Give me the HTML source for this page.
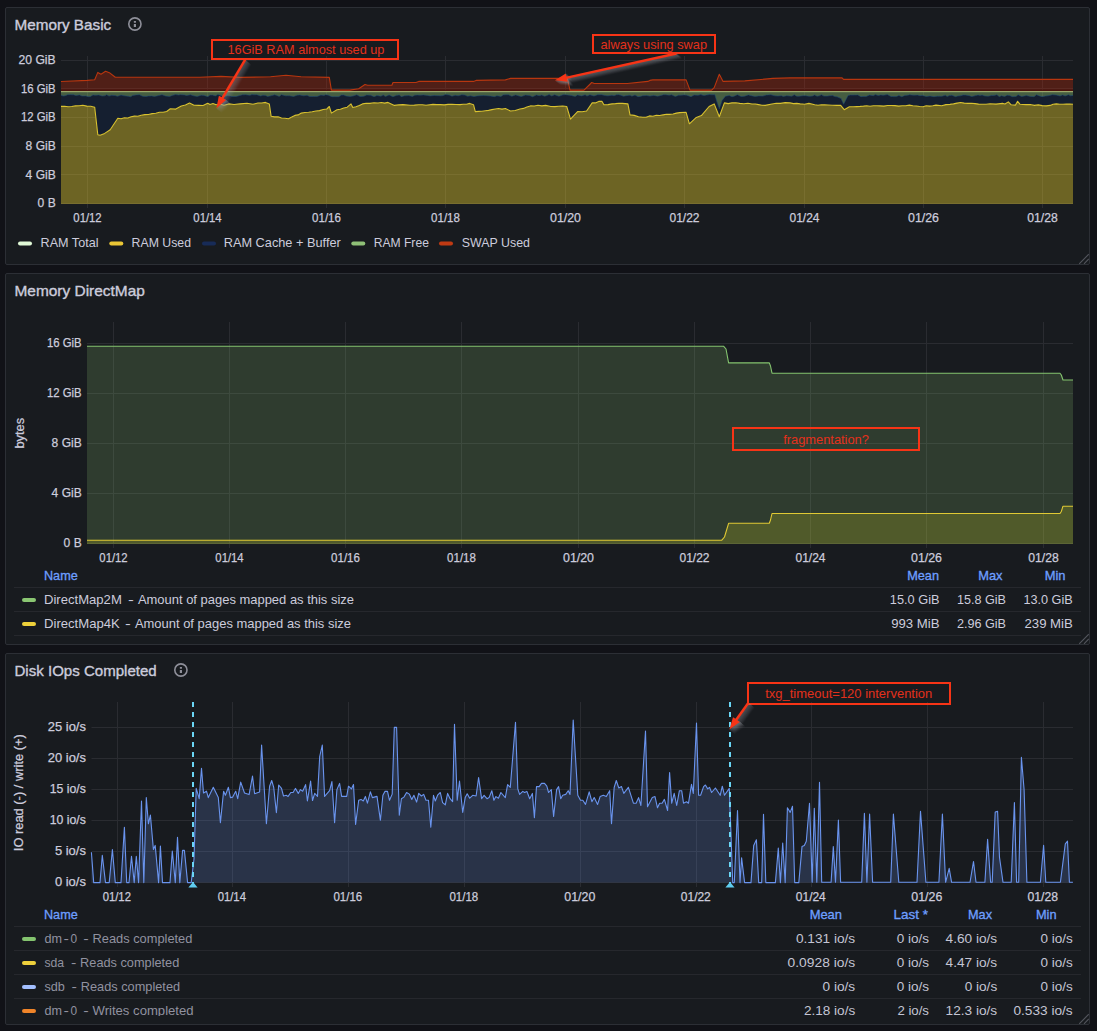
<!DOCTYPE html>
<html lang="en"><head><meta charset="utf-8"><title>Node Exporter Full - Grafana</title>
<style>
html,body{margin:0;padding:0;background:#111217;}
body{width:1097px;height:1031px;overflow:hidden;position:relative;font-family:"Liberation Sans", Arial, sans-serif;color:#ccccdc;}
.panel{position:absolute;box-sizing:border-box;background:#181b1f;border:1px solid #2c2f35;border-radius:2px;overflow:hidden;}
.panel svg{position:absolute;left:-1px;top:-1px;display:block;}
text{white-space:pre;}
</style></head><body>
<section class="panel" style="left:5px;top:7px;width:1085px;height:258px"><svg width="1085" height="258" viewBox="5 7 1085 258" font-family='"Liberation Sans", Arial, sans-serif'>
<rect x="61" y="60" width="1012" height="1" fill="#2a2c31"/>
<rect x="61" y="88" width="1012" height="1" fill="#2a2c31"/>
<rect x="61" y="117" width="1012" height="1" fill="#2a2c31"/>
<rect x="61" y="146" width="1012" height="1" fill="#2a2c31"/>
<rect x="61" y="174" width="1012" height="1" fill="#2a2c31"/>
<rect x="61" y="203" width="1012" height="1" fill="#2a2c31"/>
<rect x="87" y="56" width="1" height="152" fill="#2a2c31"/>
<rect x="207" y="56" width="1" height="152" fill="#2a2c31"/>
<rect x="326" y="56" width="1" height="152" fill="#2a2c31"/>
<rect x="445" y="56" width="1" height="152" fill="#2a2c31"/>
<rect x="565" y="56" width="1" height="152" fill="#2a2c31"/>
<rect x="684" y="56" width="1" height="152" fill="#2a2c31"/>
<rect x="804" y="56" width="1" height="152" fill="#2a2c31"/>
<rect x="923" y="56" width="1" height="152" fill="#2a2c31"/>
<rect x="1042" y="56" width="1" height="152" fill="#2a2c31"/>
<polygon points="61.0,106.4 64.6,106.3 68.2,106.8 71.8,106.5 75.5,105.9 79.2,105.8 82.8,105.3 86.8,106.1 90.7,106.2 94.7,107.3 97.8,134.7 100.1,135.2 104.7,133.4 110.2,129.7 117.8,118.3 121.1,118.8 124.4,117.7 127.8,118.0 131.1,116.7 134.5,116.1 137.8,116.3 141.2,115.2 144.8,114.6 148.5,114.5 152.1,113.6 155.8,113.2 159.4,112.2 163.1,112.2 166.7,111.5 170.3,108.8 175.8,109.1 181.3,106.0 185.4,105.0 189.5,103.1 194.0,105.3 198.6,105.4 203.1,105.5 207.7,103.3 210.0,104.6 213.0,103.5 216.0,104.8 220.0,104.0 224.0,105.2 229.0,103.9 234.0,104.5 240.0,103.9 247.0,103.3 253.0,104.2 258.0,103.0 261.8,103.0 265.5,102.4 269.3,103.9 271.1,116.2 274.6,116.9 278.1,116.7 281.5,118.0 285.0,118.3 288.5,118.7 291.7,117.1 294.9,115.4 298.1,114.9 301.3,113.1 304.9,112.5 308.6,112.2 312.2,111.8 315.9,111.0 319.5,110.6 323.2,109.5 326.8,109.0 329.3,106.5 331.4,113.1 337.0,109.8 340.4,109.3 343.8,108.0 347.2,107.2 351.0,103.9 352.8,107.5 356.0,106.8 359.3,105.5 362.5,103.9 366.2,103.2 370.0,103.4 374.0,102.8 378.0,103.0 381.3,102.5 384.7,103.1 388.0,102.4 394.4,105.4 398.7,104.9 403.0,104.6 410.0,105.3 414.4,105.1 418.7,104.7 422.4,104.7 426.0,105.2 433.0,104.4 436.7,104.6 440.5,104.6 444.2,104.9 448.1,104.4 452.0,104.2 456.0,104.5 460.0,104.6 463.2,104.3 466.5,104.2 469.7,103.4 473.5,104.7 475.3,111.6 478.6,111.4 481.9,111.2 485.2,110.7 488.6,110.4 491.9,109.6 495.2,109.0 498.6,108.5 502.0,109.1 505.4,108.5 510.5,111.0 515.2,110.5 520.0,109.0 523.5,108.4 526.9,107.0 530.4,105.9 534.2,106.0 538.0,105.3 541.9,105.9 545.7,105.4 550.8,106.5 554.8,106.6 558.8,106.3 562.7,106.0 566.7,106.5 570.5,119.2 577.6,111.6 582.1,111.7 586.6,111.0 592.2,102.9 595.4,102.9 598.7,101.4 601.9,101.3 603.9,104.7 608.0,104.6 612.1,103.9 615.5,103.6 618.9,103.2 622.3,103.4 627.9,103.9 630.0,114.9 634.2,115.4 638.5,116.7 642.7,117.2 646.1,117.2 649.5,115.9 652.9,116.2 656.3,115.2 659.7,115.5 663.1,114.9 666.4,114.3 669.7,114.4 673.1,114.0 676.4,113.1 679.7,112.6 686.1,112.3 689.4,123.8 696.3,117.4 701.4,115.6 709.1,106.5 714.2,103.9 719.3,116.7 724.4,102.9 728.2,103.6 732.0,102.9 735.9,102.8 739.7,103.4 743.8,103.7 747.9,103.3 752.0,104.0 755.3,104.0 758.6,104.6 761.9,105.2 765.2,105.4 772.0,104.0 776.2,103.3 780.5,103.4 785.2,102.6 790.0,102.9 793.4,103.6 796.8,103.4 800.2,103.9 804.5,104.2 808.9,103.4 814.7,104.8 818.0,105.3 821.4,104.8 824.7,104.9 828.0,105.0 832.2,105.2 836.5,105.4 840.7,105.4 844.2,109.7 849.4,106.8 853.2,106.8 857.0,106.6 860.2,106.4 863.5,106.1 866.7,105.7 870.0,106.2 873.4,105.8 876.7,105.8 880.0,105.9 883.8,106.1 887.5,105.5 891.2,105.5 895.0,105.6 898.6,106.1 902.2,105.7 905.7,105.7 909.3,105.1 912.9,105.7 916.3,106.0 919.6,106.5 923.0,106.8 926.2,105.8 929.5,106.1 932.8,105.7 936.0,105.1 941.8,105.7 945.9,104.6 950.0,104.4 953.5,103.9 957.1,103.1 960.6,102.5 964.2,103.1 967.8,103.4 971.4,103.3 975.0,103.6 978.6,104.1 982.3,104.2 986.1,104.2 990.0,103.7 996.0,104.1 1002.5,103.4 1005.0,104.0 1008.3,101.9 1011.2,104.8 1015.5,105.1 1017.6,101.3 1019.9,104.2 1026.0,104.6 1030.2,104.5 1034.3,105.4 1038.3,104.9 1042.2,105.6 1046.2,105.9 1050.2,105.4 1053.1,104.2 1056.4,103.9 1059.7,104.2 1063.0,104.3 1066.4,104.0 1069.7,104.1 1073.0,104.2 1073,204 61,204" fill="#EDD22C" fill-opacity="0.40"/>
<polygon points="61.0,95.3 63.2,96.0 65.1,95.8 67.8,94.7 70.8,94.7 73.7,94.8 75.7,95.5 79.5,94.9 81.8,96.0 85.9,95.9 88.6,96.7 90.5,96.5 93.0,94.9 95.1,95.3 98.9,95.0 102.1,96.0 104.8,95.8 106.7,94.7 109.0,96.1 111.8,95.3 115.1,95.6 117.6,96.3 121.0,95.1 124.2,95.8 128.1,96.2 130.6,96.8 132.7,95.5 136.3,94.9 139.3,94.7 142.7,96.3 145.9,96.5 148.4,96.1 151.7,95.9 154.5,96.4 158.6,95.6 162.0,94.7 165.5,96.0 169.7,96.4 172.2,95.4 175.6,94.6 178.5,95.0 180.6,94.7 184.2,94.9 186.6,95.5 190.5,94.8 193.4,95.8 197.3,96.4 201.2,95.2 203.9,95.4 207.9,96.7 210.0,95.0 212.4,95.1 215.4,95.9 217.8,94.6 220.6,95.4 223.7,96.7 227.2,95.7 230.5,96.1 232.4,96.6 236.1,96.5 239.8,95.5 242.6,94.8 245.9,94.7 247.8,95.1 250.0,95.3 252.0,94.6 254.1,94.8 256.8,94.7 260.7,96.0 262.9,95.2 265.5,95.4 267.6,96.5 271.8,95.6 274.7,94.8 276.8,95.4 279.2,96.4 281.4,94.7 285.5,95.8 287.6,95.8 289.5,95.8 293.6,96.5 297.1,95.2 299.8,95.0 303.4,95.8 307.1,95.3 309.4,96.4 313.6,96.5 317.3,96.4 320.9,95.1 324.0,95.4 325.8,94.7 328.3,95.2 331.8,96.7 334.6,96.7 338.8,96.7 341.5,95.1 343.8,95.0 346.1,96.0 350.1,96.4 353.0,96.0 356.8,94.8 360.1,96.6 363.8,96.3 366.8,95.0 370.5,95.3 374.2,96.7 376.9,95.5 381.0,96.2 383.2,94.9 385.4,96.6 389.1,94.9 392.9,96.8 396.3,95.4 399.4,94.9 401.2,96.7 404.6,95.8 408.6,95.6 412.5,96.4 414.8,95.2 417.3,95.1 420.5,95.2 423.3,94.9 427.3,95.4 430.2,95.9 434.2,95.5 438.2,95.7 441.3,95.8 443.1,95.6 445.4,94.6 449.1,95.0 452.0,96.2 455.1,95.3 458.2,95.8 461.9,94.8 465.0,95.1 467.5,96.3 470.5,95.8 474.1,96.6 477.0,95.9 480.0,95.7 483.5,95.6 486.5,95.7 490.6,96.1 494.5,96.7 496.9,95.8 501.0,96.4 503.1,94.9 506.0,94.8 508.4,94.8 511.8,96.3 515.7,94.9 519.2,96.1 521.4,96.5 525.5,95.1 529.6,95.5 532.6,96.8 536.4,95.0 539.2,95.7 541.8,95.0 544.4,96.2 546.2,95.8 549.1,94.6 551.7,96.0 554.7,94.7 558.9,96.3 563.0,94.8 565.4,94.7 569.1,95.2 571.2,95.5 575.2,96.4 577.6,94.9 581.6,95.9 585.1,94.8 587.0,96.1 589.9,94.8 593.9,96.0 597.6,94.8 601.5,94.7 605.4,95.6 608.0,95.8 612.0,95.2 614.1,95.8 616.5,94.8 618.7,94.7 621.0,95.3 623.5,96.3 626.0,95.7 628.2,95.4 630.1,95.2 631.9,96.2 635.0,95.0 638.0,96.7 640.0,96.4 642.8,95.7 646.7,95.5 649.7,96.1 653.8,95.4 657.6,96.2 660.9,95.5 663.6,94.7 665.7,94.8 669.3,95.2 671.5,94.8 675.3,96.5 678.7,95.2 681.1,95.2 684.0,94.9 686.8,95.2 691.0,96.7 694.1,95.1 698.2,95.3 700.8,94.6 703.6,95.6 706.6,95.0 709.6,94.6 712.0,94.8 714.8,94.7 716.6,100.8 719.0,107.8 719.3,108.8 722.1,100.5 725.4,96.2 729.3,95.5 731.9,96.8 734.1,96.2 737.4,94.7 741.2,96.6 744.5,96.2 748.3,94.9 751.3,95.7 755.1,96.4 758.9,95.9 762.9,96.1 766.3,95.1 768.2,94.9 770.9,94.8 774.7,95.8 778.0,96.0 781.4,95.7 783.2,96.4 786.8,95.7 789.9,96.1 791.9,96.2 794.3,94.8 796.7,96.2 799.0,96.2 803.1,95.7 805.9,95.7 809.3,96.3 812.6,96.0 814.6,94.9 817.0,96.2 819.5,95.8 821.3,94.7 823.8,96.1 827.2,96.1 829.7,95.7 832.7,95.6 834.7,96.6 837.0,96.8 841.1,98.6 843.6,104.3 844.0,103.5 848.1,95.6 850.5,95.1 854.6,95.1 857.8,94.9 860.9,96.7 863.0,96.4 866.0,96.6 869.5,95.1 873.4,95.7 875.3,94.6 878.3,95.6 880.8,94.9 883.4,95.3 887.3,94.6 890.9,96.4 892.9,96.6 896.5,96.6 898.9,95.4 901.7,96.8 904.9,95.4 907.7,95.2 909.6,94.8 913.5,95.2 917.5,95.1 919.9,95.7 922.2,95.4 926.3,96.5 930.0,96.0 934.0,96.7 937.1,96.2 939.1,96.2 941.9,96.3 945.3,95.2 947.2,96.6 949.3,95.6 951.9,95.3 955.5,96.7 957.9,96.0 960.5,95.8 963.2,95.0 965.4,95.1 969.4,95.7 971.7,96.6 975.9,95.6 978.0,95.0 980.0,95.4 982.1,95.1 984.5,95.9 988.4,96.2 991.2,95.5 994.3,95.4 996.9,94.7 999.3,96.7 1001.4,95.7 1004.7,96.5 1007.1,95.2 1009.5,95.5 1012.3,96.7 1016.2,96.5 1018.0,94.7 1021.5,96.6 1024.5,95.9 1026.3,95.5 1030.3,96.4 1034.1,96.7 1036.5,94.8 1038.7,95.7 1042.1,96.7 1045.7,96.0 1049.3,95.6 1052.4,94.7 1056.1,95.1 1060.1,96.0 1062.6,94.9 1065.1,96.0 1068.5,94.8 1070.5,95.8 1073.0,95.4 1073.0,104.2 1069.7,104.1 1066.4,104.0 1063.0,104.3 1059.7,104.2 1056.4,103.9 1053.1,104.2 1050.2,105.4 1046.2,105.9 1042.2,105.6 1038.3,104.9 1034.3,105.4 1030.2,104.5 1026.0,104.6 1019.9,104.2 1017.6,101.3 1015.5,105.1 1011.2,104.8 1008.3,101.9 1005.0,104.0 1002.5,103.4 996.0,104.1 990.0,103.7 986.1,104.2 982.3,104.2 978.6,104.1 975.0,103.6 971.4,103.3 967.8,103.4 964.2,103.1 960.6,102.5 957.1,103.1 953.5,103.9 950.0,104.4 945.9,104.6 941.8,105.7 936.0,105.1 932.8,105.7 929.5,106.1 926.2,105.8 923.0,106.8 919.6,106.5 916.3,106.0 912.9,105.7 909.3,105.1 905.7,105.7 902.2,105.7 898.6,106.1 895.0,105.6 891.2,105.5 887.5,105.5 883.8,106.1 880.0,105.9 876.7,105.8 873.4,105.8 870.0,106.2 866.7,105.7 863.5,106.1 860.2,106.4 857.0,106.6 853.2,106.8 849.4,106.8 844.2,109.7 840.7,105.4 836.5,105.4 832.2,105.2 828.0,105.0 824.7,104.9 821.4,104.8 818.0,105.3 814.7,104.8 808.9,103.4 804.5,104.2 800.2,103.9 796.8,103.4 793.4,103.6 790.0,102.9 785.2,102.6 780.5,103.4 776.2,103.3 772.0,104.0 765.2,105.4 761.9,105.2 758.6,104.6 755.3,104.0 752.0,104.0 747.9,103.3 743.8,103.7 739.7,103.4 735.9,102.8 732.0,102.9 728.2,103.6 724.4,102.9 719.3,116.7 714.2,103.9 709.1,106.5 701.4,115.6 696.3,117.4 689.4,123.8 686.1,112.3 679.7,112.6 676.4,113.1 673.1,114.0 669.7,114.4 666.4,114.3 663.1,114.9 659.7,115.5 656.3,115.2 652.9,116.2 649.5,115.9 646.1,117.2 642.7,117.2 638.5,116.7 634.2,115.4 630.0,114.9 627.9,103.9 622.3,103.4 618.9,103.2 615.5,103.6 612.1,103.9 608.0,104.6 603.9,104.7 601.9,101.3 598.7,101.4 595.4,102.9 592.2,102.9 586.6,111.0 582.1,111.7 577.6,111.6 570.5,119.2 566.7,106.5 562.7,106.0 558.8,106.3 554.8,106.6 550.8,106.5 545.7,105.4 541.9,105.9 538.0,105.3 534.2,106.0 530.4,105.9 526.9,107.0 523.5,108.4 520.0,109.0 515.2,110.5 510.5,111.0 505.4,108.5 502.0,109.1 498.6,108.5 495.2,109.0 491.9,109.6 488.6,110.4 485.2,110.7 481.9,111.2 478.6,111.4 475.3,111.6 473.5,104.7 469.7,103.4 466.5,104.2 463.2,104.3 460.0,104.6 456.0,104.5 452.0,104.2 448.1,104.4 444.2,104.9 440.5,104.6 436.7,104.6 433.0,104.4 426.0,105.2 422.4,104.7 418.7,104.7 414.4,105.1 410.0,105.3 403.0,104.6 398.7,104.9 394.4,105.4 388.0,102.4 384.7,103.1 381.3,102.5 378.0,103.0 374.0,102.8 370.0,103.4 366.2,103.2 362.5,103.9 359.3,105.5 356.0,106.8 352.8,107.5 351.0,103.9 347.2,107.2 343.8,108.0 340.4,109.3 337.0,109.8 331.4,113.1 329.3,106.5 326.8,109.0 323.2,109.5 319.5,110.6 315.9,111.0 312.2,111.8 308.6,112.2 304.9,112.5 301.3,113.1 298.1,114.9 294.9,115.4 291.7,117.1 288.5,118.7 285.0,118.3 281.5,118.0 278.1,116.7 274.6,116.9 271.1,116.2 269.3,103.9 265.5,102.4 261.8,103.0 258.0,103.0 253.0,104.2 247.0,103.3 240.0,103.9 234.0,104.5 229.0,103.9 224.0,105.2 220.0,104.0 216.0,104.8 213.0,103.5 210.0,104.6 207.7,103.3 203.1,105.5 198.6,105.4 194.0,105.3 189.5,103.1 185.4,105.0 181.3,106.0 175.8,109.1 170.3,108.8 166.7,111.5 163.1,112.2 159.4,112.2 155.8,113.2 152.1,113.6 148.5,114.5 144.8,114.6 141.2,115.2 137.8,116.3 134.5,116.1 131.1,116.7 127.8,118.0 124.4,117.7 121.1,118.8 117.8,118.3 110.2,129.7 104.7,133.4 100.1,135.2 97.8,134.7 94.7,107.3 90.7,106.2 86.8,106.1 82.8,105.3 79.2,105.8 75.5,105.9 71.8,106.5 68.2,106.8 64.6,106.3 61.0,106.4" fill="#151f30"/>
<polygon points="61,91.5 1073,91.5 1073.0,95.4 1070.5,95.8 1068.5,94.8 1065.1,96.0 1062.6,94.9 1060.1,96.0 1056.1,95.1 1052.4,94.7 1049.3,95.6 1045.7,96.0 1042.1,96.7 1038.7,95.7 1036.5,94.8 1034.1,96.7 1030.3,96.4 1026.3,95.5 1024.5,95.9 1021.5,96.6 1018.0,94.7 1016.2,96.5 1012.3,96.7 1009.5,95.5 1007.1,95.2 1004.7,96.5 1001.4,95.7 999.3,96.7 996.9,94.7 994.3,95.4 991.2,95.5 988.4,96.2 984.5,95.9 982.1,95.1 980.0,95.4 978.0,95.0 975.9,95.6 971.7,96.6 969.4,95.7 965.4,95.1 963.2,95.0 960.5,95.8 957.9,96.0 955.5,96.7 951.9,95.3 949.3,95.6 947.2,96.6 945.3,95.2 941.9,96.3 939.1,96.2 937.1,96.2 934.0,96.7 930.0,96.0 926.3,96.5 922.2,95.4 919.9,95.7 917.5,95.1 913.5,95.2 909.6,94.8 907.7,95.2 904.9,95.4 901.7,96.8 898.9,95.4 896.5,96.6 892.9,96.6 890.9,96.4 887.3,94.6 883.4,95.3 880.8,94.9 878.3,95.6 875.3,94.6 873.4,95.7 869.5,95.1 866.0,96.6 863.0,96.4 860.9,96.7 857.8,94.9 854.6,95.1 850.5,95.1 848.1,95.6 844.0,103.5 843.6,104.3 841.1,98.6 837.0,96.8 834.7,96.6 832.7,95.6 829.7,95.7 827.2,96.1 823.8,96.1 821.3,94.7 819.5,95.8 817.0,96.2 814.6,94.9 812.6,96.0 809.3,96.3 805.9,95.7 803.1,95.7 799.0,96.2 796.7,96.2 794.3,94.8 791.9,96.2 789.9,96.1 786.8,95.7 783.2,96.4 781.4,95.7 778.0,96.0 774.7,95.8 770.9,94.8 768.2,94.9 766.3,95.1 762.9,96.1 758.9,95.9 755.1,96.4 751.3,95.7 748.3,94.9 744.5,96.2 741.2,96.6 737.4,94.7 734.1,96.2 731.9,96.8 729.3,95.5 725.4,96.2 722.1,100.5 719.3,108.8 719.0,107.8 716.6,100.8 714.8,94.7 712.0,94.8 709.6,94.6 706.6,95.0 703.6,95.6 700.8,94.6 698.2,95.3 694.1,95.1 691.0,96.7 686.8,95.2 684.0,94.9 681.1,95.2 678.7,95.2 675.3,96.5 671.5,94.8 669.3,95.2 665.7,94.8 663.6,94.7 660.9,95.5 657.6,96.2 653.8,95.4 649.7,96.1 646.7,95.5 642.8,95.7 640.0,96.4 638.0,96.7 635.0,95.0 631.9,96.2 630.1,95.2 628.2,95.4 626.0,95.7 623.5,96.3 621.0,95.3 618.7,94.7 616.5,94.8 614.1,95.8 612.0,95.2 608.0,95.8 605.4,95.6 601.5,94.7 597.6,94.8 593.9,96.0 589.9,94.8 587.0,96.1 585.1,94.8 581.6,95.9 577.6,94.9 575.2,96.4 571.2,95.5 569.1,95.2 565.4,94.7 563.0,94.8 558.9,96.3 554.7,94.7 551.7,96.0 549.1,94.6 546.2,95.8 544.4,96.2 541.8,95.0 539.2,95.7 536.4,95.0 532.6,96.8 529.6,95.5 525.5,95.1 521.4,96.5 519.2,96.1 515.7,94.9 511.8,96.3 508.4,94.8 506.0,94.8 503.1,94.9 501.0,96.4 496.9,95.8 494.5,96.7 490.6,96.1 486.5,95.7 483.5,95.6 480.0,95.7 477.0,95.9 474.1,96.6 470.5,95.8 467.5,96.3 465.0,95.1 461.9,94.8 458.2,95.8 455.1,95.3 452.0,96.2 449.1,95.0 445.4,94.6 443.1,95.6 441.3,95.8 438.2,95.7 434.2,95.5 430.2,95.9 427.3,95.4 423.3,94.9 420.5,95.2 417.3,95.1 414.8,95.2 412.5,96.4 408.6,95.6 404.6,95.8 401.2,96.7 399.4,94.9 396.3,95.4 392.9,96.8 389.1,94.9 385.4,96.6 383.2,94.9 381.0,96.2 376.9,95.5 374.2,96.7 370.5,95.3 366.8,95.0 363.8,96.3 360.1,96.6 356.8,94.8 353.0,96.0 350.1,96.4 346.1,96.0 343.8,95.0 341.5,95.1 338.8,96.7 334.6,96.7 331.8,96.7 328.3,95.2 325.8,94.7 324.0,95.4 320.9,95.1 317.3,96.4 313.6,96.5 309.4,96.4 307.1,95.3 303.4,95.8 299.8,95.0 297.1,95.2 293.6,96.5 289.5,95.8 287.6,95.8 285.5,95.8 281.4,94.7 279.2,96.4 276.8,95.4 274.7,94.8 271.8,95.6 267.6,96.5 265.5,95.4 262.9,95.2 260.7,96.0 256.8,94.7 254.1,94.8 252.0,94.6 250.0,95.3 247.8,95.1 245.9,94.7 242.6,94.8 239.8,95.5 236.1,96.5 232.4,96.6 230.5,96.1 227.2,95.7 223.7,96.7 220.6,95.4 217.8,94.6 215.4,95.9 212.4,95.1 210.0,95.0 207.9,96.7 203.9,95.4 201.2,95.2 197.3,96.4 193.4,95.8 190.5,94.8 186.6,95.5 184.2,94.9 180.6,94.7 178.5,95.0 175.6,94.6 172.2,95.4 169.7,96.4 165.5,96.0 162.0,94.7 158.6,95.6 154.5,96.4 151.7,95.9 148.4,96.1 145.9,96.5 142.7,96.3 139.3,94.7 136.3,94.9 132.7,95.5 130.6,96.8 128.1,96.2 124.2,95.8 121.0,95.1 117.6,96.3 115.1,95.6 111.8,95.3 109.0,96.1 106.7,94.7 104.8,95.8 102.1,96.0 98.9,95.0 95.1,95.3 93.0,94.9 90.5,96.5 88.6,96.7 85.9,95.9 81.8,96.0 79.5,94.9 75.7,95.5 73.7,94.8 70.8,94.7 67.8,94.7 65.1,95.8 63.2,96.0 61.0,95.3" fill="#7EB26D" fill-opacity="0.45"/>
<polygon points="61.0,81.5 87.4,80.4 94.7,79.7 97.8,72.4 101.0,74.2 105.6,71.3 110.0,73.1 115.3,77.3 200.0,77.3 221.0,76.4 240.0,77.4 270.6,76.8 286.0,75.3 301.0,76.8 329.3,77.4 331.4,90.1 349.7,90.1 358.7,88.8 365.0,84.5 367.6,85.3 391.9,85.3 393.0,82.5 416.0,82.5 418.7,81.4 473.5,81.4 476.0,80.4 505.4,79.9 510.5,78.4 567.4,78.4 570.0,90.1 584.0,90.1 591.7,82.5 594.2,83.5 627.4,83.5 647.8,81.4 649.9,80.4 652.9,79.9 686.1,79.9 690.0,90.1 711.6,90.1 714.2,87.6 719.3,74.3 723.1,81.4 744.8,80.9 772.9,78.4 790.0,77.9 842.1,77.9 843.5,79.4 1073.0,79.4 1073,90.9 61,90.9" fill="#B4260C" fill-opacity="0.36"/>
<rect x="61" y="89.6" width="1012" height="1.3" fill="#4a110c"/>
<polyline points="61.0,95.3 63.2,96.0 65.1,95.8 67.8,94.7 70.8,94.7 73.7,94.8 75.7,95.5 79.5,94.9 81.8,96.0 85.9,95.9 88.6,96.7 90.5,96.5 93.0,94.9 95.1,95.3 98.9,95.0 102.1,96.0 104.8,95.8 106.7,94.7 109.0,96.1 111.8,95.3 115.1,95.6 117.6,96.3 121.0,95.1 124.2,95.8 128.1,96.2 130.6,96.8 132.7,95.5 136.3,94.9 139.3,94.7 142.7,96.3 145.9,96.5 148.4,96.1 151.7,95.9 154.5,96.4 158.6,95.6 162.0,94.7 165.5,96.0 169.7,96.4 172.2,95.4 175.6,94.6 178.5,95.0 180.6,94.7 184.2,94.9 186.6,95.5 190.5,94.8 193.4,95.8 197.3,96.4 201.2,95.2 203.9,95.4 207.9,96.7 210.0,95.0 212.4,95.1 215.4,95.9 217.8,94.6 220.6,95.4 223.7,96.7 227.2,95.7 230.5,96.1 232.4,96.6 236.1,96.5 239.8,95.5 242.6,94.8 245.9,94.7 247.8,95.1 250.0,95.3 252.0,94.6 254.1,94.8 256.8,94.7 260.7,96.0 262.9,95.2 265.5,95.4 267.6,96.5 271.8,95.6 274.7,94.8 276.8,95.4 279.2,96.4 281.4,94.7 285.5,95.8 287.6,95.8 289.5,95.8 293.6,96.5 297.1,95.2 299.8,95.0 303.4,95.8 307.1,95.3 309.4,96.4 313.6,96.5 317.3,96.4 320.9,95.1 324.0,95.4 325.8,94.7 328.3,95.2 331.8,96.7 334.6,96.7 338.8,96.7 341.5,95.1 343.8,95.0 346.1,96.0 350.1,96.4 353.0,96.0 356.8,94.8 360.1,96.6 363.8,96.3 366.8,95.0 370.5,95.3 374.2,96.7 376.9,95.5 381.0,96.2 383.2,94.9 385.4,96.6 389.1,94.9 392.9,96.8 396.3,95.4 399.4,94.9 401.2,96.7 404.6,95.8 408.6,95.6 412.5,96.4 414.8,95.2 417.3,95.1 420.5,95.2 423.3,94.9 427.3,95.4 430.2,95.9 434.2,95.5 438.2,95.7 441.3,95.8 443.1,95.6 445.4,94.6 449.1,95.0 452.0,96.2 455.1,95.3 458.2,95.8 461.9,94.8 465.0,95.1 467.5,96.3 470.5,95.8 474.1,96.6 477.0,95.9 480.0,95.7 483.5,95.6 486.5,95.7 490.6,96.1 494.5,96.7 496.9,95.8 501.0,96.4 503.1,94.9 506.0,94.8 508.4,94.8 511.8,96.3 515.7,94.9 519.2,96.1 521.4,96.5 525.5,95.1 529.6,95.5 532.6,96.8 536.4,95.0 539.2,95.7 541.8,95.0 544.4,96.2 546.2,95.8 549.1,94.6 551.7,96.0 554.7,94.7 558.9,96.3 563.0,94.8 565.4,94.7 569.1,95.2 571.2,95.5 575.2,96.4 577.6,94.9 581.6,95.9 585.1,94.8 587.0,96.1 589.9,94.8 593.9,96.0 597.6,94.8 601.5,94.7 605.4,95.6 608.0,95.8 612.0,95.2 614.1,95.8 616.5,94.8 618.7,94.7 621.0,95.3 623.5,96.3 626.0,95.7 628.2,95.4 630.1,95.2 631.9,96.2 635.0,95.0 638.0,96.7 640.0,96.4 642.8,95.7 646.7,95.5 649.7,96.1 653.8,95.4 657.6,96.2 660.9,95.5 663.6,94.7 665.7,94.8 669.3,95.2 671.5,94.8 675.3,96.5 678.7,95.2 681.1,95.2 684.0,94.9 686.8,95.2 691.0,96.7 694.1,95.1 698.2,95.3 700.8,94.6 703.6,95.6 706.6,95.0 709.6,94.6 712.0,94.8 714.8,94.7 716.6,100.8 719.0,107.8 719.3,108.8 722.1,100.5 725.4,96.2 729.3,95.5 731.9,96.8 734.1,96.2 737.4,94.7 741.2,96.6 744.5,96.2 748.3,94.9 751.3,95.7 755.1,96.4 758.9,95.9 762.9,96.1 766.3,95.1 768.2,94.9 770.9,94.8 774.7,95.8 778.0,96.0 781.4,95.7 783.2,96.4 786.8,95.7 789.9,96.1 791.9,96.2 794.3,94.8 796.7,96.2 799.0,96.2 803.1,95.7 805.9,95.7 809.3,96.3 812.6,96.0 814.6,94.9 817.0,96.2 819.5,95.8 821.3,94.7 823.8,96.1 827.2,96.1 829.7,95.7 832.7,95.6 834.7,96.6 837.0,96.8 841.1,98.6 843.6,104.3 844.0,103.5 848.1,95.6 850.5,95.1 854.6,95.1 857.8,94.9 860.9,96.7 863.0,96.4 866.0,96.6 869.5,95.1 873.4,95.7 875.3,94.6 878.3,95.6 880.8,94.9 883.4,95.3 887.3,94.6 890.9,96.4 892.9,96.6 896.5,96.6 898.9,95.4 901.7,96.8 904.9,95.4 907.7,95.2 909.6,94.8 913.5,95.2 917.5,95.1 919.9,95.7 922.2,95.4 926.3,96.5 930.0,96.0 934.0,96.7 937.1,96.2 939.1,96.2 941.9,96.3 945.3,95.2 947.2,96.6 949.3,95.6 951.9,95.3 955.5,96.7 957.9,96.0 960.5,95.8 963.2,95.0 965.4,95.1 969.4,95.7 971.7,96.6 975.9,95.6 978.0,95.0 980.0,95.4 982.1,95.1 984.5,95.9 988.4,96.2 991.2,95.5 994.3,95.4 996.9,94.7 999.3,96.7 1001.4,95.7 1004.7,96.5 1007.1,95.2 1009.5,95.5 1012.3,96.7 1016.2,96.5 1018.0,94.7 1021.5,96.6 1024.5,95.9 1026.3,95.5 1030.3,96.4 1034.1,96.7 1036.5,94.8 1038.7,95.7 1042.1,96.7 1045.7,96.0 1049.3,95.6 1052.4,94.7 1056.1,95.1 1060.1,96.0 1062.6,94.9 1065.1,96.0 1068.5,94.8 1070.5,95.8 1073.0,95.4" fill="none" stroke="#1d4a7a" stroke-width="1" stroke-opacity="0.55"/>
<polyline points="61.0,106.4 64.6,106.3 68.2,106.8 71.8,106.5 75.5,105.9 79.2,105.8 82.8,105.3 86.8,106.1 90.7,106.2 94.7,107.3 97.8,134.7 100.1,135.2 104.7,133.4 110.2,129.7 117.8,118.3 121.1,118.8 124.4,117.7 127.8,118.0 131.1,116.7 134.5,116.1 137.8,116.3 141.2,115.2 144.8,114.6 148.5,114.5 152.1,113.6 155.8,113.2 159.4,112.2 163.1,112.2 166.7,111.5 170.3,108.8 175.8,109.1 181.3,106.0 185.4,105.0 189.5,103.1 194.0,105.3 198.6,105.4 203.1,105.5 207.7,103.3 210.0,104.6 213.0,103.5 216.0,104.8 220.0,104.0 224.0,105.2 229.0,103.9 234.0,104.5 240.0,103.9 247.0,103.3 253.0,104.2 258.0,103.0 261.8,103.0 265.5,102.4 269.3,103.9 271.1,116.2 274.6,116.9 278.1,116.7 281.5,118.0 285.0,118.3 288.5,118.7 291.7,117.1 294.9,115.4 298.1,114.9 301.3,113.1 304.9,112.5 308.6,112.2 312.2,111.8 315.9,111.0 319.5,110.6 323.2,109.5 326.8,109.0 329.3,106.5 331.4,113.1 337.0,109.8 340.4,109.3 343.8,108.0 347.2,107.2 351.0,103.9 352.8,107.5 356.0,106.8 359.3,105.5 362.5,103.9 366.2,103.2 370.0,103.4 374.0,102.8 378.0,103.0 381.3,102.5 384.7,103.1 388.0,102.4 394.4,105.4 398.7,104.9 403.0,104.6 410.0,105.3 414.4,105.1 418.7,104.7 422.4,104.7 426.0,105.2 433.0,104.4 436.7,104.6 440.5,104.6 444.2,104.9 448.1,104.4 452.0,104.2 456.0,104.5 460.0,104.6 463.2,104.3 466.5,104.2 469.7,103.4 473.5,104.7 475.3,111.6 478.6,111.4 481.9,111.2 485.2,110.7 488.6,110.4 491.9,109.6 495.2,109.0 498.6,108.5 502.0,109.1 505.4,108.5 510.5,111.0 515.2,110.5 520.0,109.0 523.5,108.4 526.9,107.0 530.4,105.9 534.2,106.0 538.0,105.3 541.9,105.9 545.7,105.4 550.8,106.5 554.8,106.6 558.8,106.3 562.7,106.0 566.7,106.5 570.5,119.2 577.6,111.6 582.1,111.7 586.6,111.0 592.2,102.9 595.4,102.9 598.7,101.4 601.9,101.3 603.9,104.7 608.0,104.6 612.1,103.9 615.5,103.6 618.9,103.2 622.3,103.4 627.9,103.9 630.0,114.9 634.2,115.4 638.5,116.7 642.7,117.2 646.1,117.2 649.5,115.9 652.9,116.2 656.3,115.2 659.7,115.5 663.1,114.9 666.4,114.3 669.7,114.4 673.1,114.0 676.4,113.1 679.7,112.6 686.1,112.3 689.4,123.8 696.3,117.4 701.4,115.6 709.1,106.5 714.2,103.9 719.3,116.7 724.4,102.9 728.2,103.6 732.0,102.9 735.9,102.8 739.7,103.4 743.8,103.7 747.9,103.3 752.0,104.0 755.3,104.0 758.6,104.6 761.9,105.2 765.2,105.4 772.0,104.0 776.2,103.3 780.5,103.4 785.2,102.6 790.0,102.9 793.4,103.6 796.8,103.4 800.2,103.9 804.5,104.2 808.9,103.4 814.7,104.8 818.0,105.3 821.4,104.8 824.7,104.9 828.0,105.0 832.2,105.2 836.5,105.4 840.7,105.4 844.2,109.7 849.4,106.8 853.2,106.8 857.0,106.6 860.2,106.4 863.5,106.1 866.7,105.7 870.0,106.2 873.4,105.8 876.7,105.8 880.0,105.9 883.8,106.1 887.5,105.5 891.2,105.5 895.0,105.6 898.6,106.1 902.2,105.7 905.7,105.7 909.3,105.1 912.9,105.7 916.3,106.0 919.6,106.5 923.0,106.8 926.2,105.8 929.5,106.1 932.8,105.7 936.0,105.1 941.8,105.7 945.9,104.6 950.0,104.4 953.5,103.9 957.1,103.1 960.6,102.5 964.2,103.1 967.8,103.4 971.4,103.3 975.0,103.6 978.6,104.1 982.3,104.2 986.1,104.2 990.0,103.7 996.0,104.1 1002.5,103.4 1005.0,104.0 1008.3,101.9 1011.2,104.8 1015.5,105.1 1017.6,101.3 1019.9,104.2 1026.0,104.6 1030.2,104.5 1034.3,105.4 1038.3,104.9 1042.2,105.6 1046.2,105.9 1050.2,105.4 1053.1,104.2 1056.4,103.9 1059.7,104.2 1063.0,104.3 1066.4,104.0 1069.7,104.1 1073.0,104.2" fill="none" stroke="#d9c230" stroke-width="1.1" stroke-linejoin="round"/>
<polyline points="61.0,81.5 87.4,80.4 94.7,79.7 97.8,72.4 101.0,74.2 105.6,71.3 110.0,73.1 115.3,77.3 200.0,77.3 221.0,76.4 240.0,77.4 270.6,76.8 286.0,75.3 301.0,76.8 329.3,77.4 331.4,90.1 349.7,90.1 358.7,88.8 365.0,84.5 367.6,85.3 391.9,85.3 393.0,82.5 416.0,82.5 418.7,81.4 473.5,81.4 476.0,80.4 505.4,79.9 510.5,78.4 567.4,78.4 570.0,90.1 584.0,90.1 591.7,82.5 594.2,83.5 627.4,83.5 647.8,81.4 649.9,80.4 652.9,79.9 686.1,79.9 690.0,90.1 711.6,90.1 714.2,87.6 719.3,74.3 723.1,81.4 744.8,80.9 772.9,78.4 790.0,77.9 842.1,77.9 843.5,79.4 1073.0,79.4" fill="none" stroke="#b8360f" stroke-width="1.1" stroke-linejoin="round"/>
<rect x="61" y="91" width="1012" height="1.2" fill="#9ca66b"/>
<text x="55.7" y="63.8" font-size="12.4" text-anchor="end" fill="#ccccdc" font-weight="400" textLength="37.2" lengthAdjust="spacingAndGlyphs" stroke="#ccccdc" stroke-width="0.25">20 GiB</text>
<text x="55.7" y="92.5" font-size="12.4" text-anchor="end" fill="#ccccdc" font-weight="400" textLength="34.7" lengthAdjust="spacingAndGlyphs" stroke="#ccccdc" stroke-width="0.25">16 GiB</text>
<text x="55.7" y="121.2" font-size="12.4" text-anchor="end" fill="#ccccdc" font-weight="400" textLength="34.7" lengthAdjust="spacingAndGlyphs" stroke="#ccccdc" stroke-width="0.25">12 GiB</text>
<text x="55.7" y="149.9" font-size="12.4" text-anchor="end" fill="#ccccdc" font-weight="400" textLength="30.1" lengthAdjust="spacingAndGlyphs" stroke="#ccccdc" stroke-width="0.25">8 GiB</text>
<text x="55.7" y="178.6" font-size="12.4" text-anchor="end" fill="#ccccdc" font-weight="400" textLength="30.1" lengthAdjust="spacingAndGlyphs" stroke="#ccccdc" stroke-width="0.25">4 GiB</text>
<text x="55.7" y="207.3" font-size="12.4" text-anchor="end" fill="#ccccdc" font-weight="400" textLength="18.1" lengthAdjust="spacingAndGlyphs" stroke="#ccccdc" stroke-width="0.25">0 B</text>
<text x="87.5" y="222.1" font-size="12.4" text-anchor="middle" fill="#ccccdc" font-weight="400" textLength="28.3" lengthAdjust="spacingAndGlyphs" stroke="#ccccdc" stroke-width="0.25">01/12</text>
<text x="207.5" y="222.1" font-size="12.4" text-anchor="middle" fill="#ccccdc" font-weight="400" textLength="28.3" lengthAdjust="spacingAndGlyphs" stroke="#ccccdc" stroke-width="0.25">01/14</text>
<text x="326.5" y="222.1" font-size="12.4" text-anchor="middle" fill="#ccccdc" font-weight="400" textLength="28.8" lengthAdjust="spacingAndGlyphs" stroke="#ccccdc" stroke-width="0.25">01/16</text>
<text x="445.5" y="222.1" font-size="12.4" text-anchor="middle" fill="#ccccdc" font-weight="400" textLength="28.8" lengthAdjust="spacingAndGlyphs" stroke="#ccccdc" stroke-width="0.25">01/18</text>
<text x="565.5" y="222.1" font-size="12.4" text-anchor="middle" fill="#ccccdc" font-weight="400" textLength="31.0" lengthAdjust="spacingAndGlyphs" stroke="#ccccdc" stroke-width="0.25">01/20</text>
<text x="684.5" y="222.1" font-size="12.4" text-anchor="middle" fill="#ccccdc" font-weight="400" textLength="30.0" lengthAdjust="spacingAndGlyphs" stroke="#ccccdc" stroke-width="0.25">01/22</text>
<text x="804.5" y="222.1" font-size="12.4" text-anchor="middle" fill="#ccccdc" font-weight="400" textLength="30.0" lengthAdjust="spacingAndGlyphs" stroke="#ccccdc" stroke-width="0.25">01/24</text>
<text x="923.5" y="222.1" font-size="12.4" text-anchor="middle" fill="#ccccdc" font-weight="400" textLength="31.0" lengthAdjust="spacingAndGlyphs" stroke="#ccccdc" stroke-width="0.25">01/26</text>
<text x="1042.5" y="222.1" font-size="12.4" text-anchor="middle" fill="#ccccdc" font-weight="400" textLength="30.5" lengthAdjust="spacingAndGlyphs" stroke="#ccccdc" stroke-width="0.25">01/28</text>
<text x="14.5" y="30.0" font-size="14.4" text-anchor="start" fill="#ccccdc" font-weight="400" textLength="96.7" lengthAdjust="spacingAndGlyphs" stroke="#ccccdc" stroke-width="0.35">Memory Basic</text>
<circle cx="134.9" cy="24.0" r="6.1" stroke="#8e8f99" fill="none" stroke-width="1.6"/><rect x="133.8" y="20.95" width="2.2" height="1.7" rx="0.3" fill="#8e8f99"/><rect x="133.8" y="23.9" width="2.2" height="3.2" rx="0.3" fill="#8e8f99"/>
<rect x="18" y="241.5" width="14" height="4" rx="2" fill="#E0F9D7"/>
<text x="40.6" y="247.0" font-size="12.4" text-anchor="start" fill="#ccccdc" font-weight="400" textLength="57.9" lengthAdjust="spacingAndGlyphs">RAM Total</text>
<rect x="109.3" y="241.5" width="14" height="4" rx="2" fill="#EAC635"/>
<text x="131.6" y="247.0" font-size="12.4" text-anchor="start" fill="#ccccdc" font-weight="400" textLength="59.4" lengthAdjust="spacingAndGlyphs">RAM Used</text>
<rect x="202" y="241.5" width="14" height="4" rx="2" fill="#172b57"/>
<text x="223.7" y="247.0" font-size="12.4" text-anchor="start" fill="#ccccdc" font-weight="400" textLength="117.1" lengthAdjust="spacingAndGlyphs">RAM Cache + Buffer</text>
<rect x="351.3" y="241.5" width="14" height="4" rx="2" fill="#8fc077"/>
<text x="373.7" y="247.0" font-size="12.4" text-anchor="start" fill="#ccccdc" font-weight="400" textLength="55.2" lengthAdjust="spacingAndGlyphs">RAM Free</text>
<rect x="439" y="241.5" width="14" height="4" rx="2" fill="#BF3A13"/>
<text x="461.8" y="247.0" font-size="12.4" text-anchor="start" fill="#ccccdc" font-weight="400" textLength="68.2" lengthAdjust="spacingAndGlyphs">SWAP Used</text>
<rect x="212" y="40" width="186" height="19" fill="none" stroke="#f73416" stroke-width="2" shape-rendering="crispEdges"/><text x="227.5" y="53.9" font-size="13.6" text-anchor="start" fill="#e3301b" font-weight="400" textLength="156.9" lengthAdjust="spacingAndGlyphs">16GiB RAM almost used up</text>
<g transform="translate(5.22,4.32)" stroke="#9c9ea6" fill="#9c9ea6" opacity="0.027"><line x1="245.2" y1="59.7" x2="221.5" y2="99.7" stroke-width="2.5"/><polygon points="216.4,108.3 218.9,95.8 226.1,100.1"/></g><g transform="translate(4.64,3.84)" stroke="#9c9ea6" fill="#9c9ea6" opacity="0.042"><line x1="245.2" y1="59.7" x2="221.5" y2="99.7" stroke-width="2.5"/><polygon points="216.4,108.3 218.9,95.8 226.1,100.1"/></g><g transform="translate(4.06,3.36)" stroke="#9c9ea6" fill="#9c9ea6" opacity="0.057"><line x1="245.2" y1="59.7" x2="221.5" y2="99.7" stroke-width="2.5"/><polygon points="216.4,108.3 218.9,95.8 226.1,100.1"/></g><g transform="translate(3.48,2.88)" stroke="#9c9ea6" fill="#9c9ea6" opacity="0.072"><line x1="245.2" y1="59.7" x2="221.5" y2="99.7" stroke-width="2.5"/><polygon points="216.4,108.3 218.9,95.8 226.1,100.1"/></g><g transform="translate(2.90,2.40)" stroke="#9c9ea6" fill="#9c9ea6" opacity="0.087"><line x1="245.2" y1="59.7" x2="221.5" y2="99.7" stroke-width="2.5"/><polygon points="216.4,108.3 218.9,95.8 226.1,100.1"/></g><g transform="translate(2.32,1.92)" stroke="#9c9ea6" fill="#9c9ea6" opacity="0.102"><line x1="245.2" y1="59.7" x2="221.5" y2="99.7" stroke-width="2.5"/><polygon points="216.4,108.3 218.9,95.8 226.1,100.1"/></g><g transform="translate(1.74,1.44)" stroke="#9c9ea6" fill="#9c9ea6" opacity="0.117"><line x1="245.2" y1="59.7" x2="221.5" y2="99.7" stroke-width="2.5"/><polygon points="216.4,108.3 218.9,95.8 226.1,100.1"/></g><g transform="translate(1.16,0.96)" stroke="#9c9ea6" fill="#9c9ea6" opacity="0.132"><line x1="245.2" y1="59.7" x2="221.5" y2="99.7" stroke-width="2.5"/><polygon points="216.4,108.3 218.9,95.8 226.1,100.1"/></g><g transform="translate(0.58,0.48)" stroke="#9c9ea6" fill="#9c9ea6" opacity="0.147"><line x1="245.2" y1="59.7" x2="221.5" y2="99.7" stroke-width="2.5"/><polygon points="216.4,108.3 218.9,95.8 226.1,100.1"/></g><g stroke="#f73416" fill="#f73416"><line x1="245.2" y1="59.7" x2="221.5" y2="99.7" stroke-width="2.5"/><polygon stroke="none" points="216.4,108.3 218.9,95.8 226.1,100.1"/></g>
<rect x="593" y="35" width="122" height="18" fill="none" stroke="#f73416" stroke-width="2" shape-rendering="crispEdges"/><text x="600.5" y="49.0" font-size="13.6" text-anchor="start" fill="#e3301b" font-weight="400" textLength="106.5" lengthAdjust="spacingAndGlyphs">always using swap</text>
<g transform="translate(5.22,4.32)" stroke="#9c9ea6" fill="#9c9ea6" opacity="0.027"><line x1="676.4" y1="53.5" x2="564.8" y2="78.1" stroke-width="2.5"/><polygon points="555.0,80.2 565.8,73.5 567.6,81.7"/></g><g transform="translate(4.64,3.84)" stroke="#9c9ea6" fill="#9c9ea6" opacity="0.042"><line x1="676.4" y1="53.5" x2="564.8" y2="78.1" stroke-width="2.5"/><polygon points="555.0,80.2 565.8,73.5 567.6,81.7"/></g><g transform="translate(4.06,3.36)" stroke="#9c9ea6" fill="#9c9ea6" opacity="0.057"><line x1="676.4" y1="53.5" x2="564.8" y2="78.1" stroke-width="2.5"/><polygon points="555.0,80.2 565.8,73.5 567.6,81.7"/></g><g transform="translate(3.48,2.88)" stroke="#9c9ea6" fill="#9c9ea6" opacity="0.072"><line x1="676.4" y1="53.5" x2="564.8" y2="78.1" stroke-width="2.5"/><polygon points="555.0,80.2 565.8,73.5 567.6,81.7"/></g><g transform="translate(2.90,2.40)" stroke="#9c9ea6" fill="#9c9ea6" opacity="0.087"><line x1="676.4" y1="53.5" x2="564.8" y2="78.1" stroke-width="2.5"/><polygon points="555.0,80.2 565.8,73.5 567.6,81.7"/></g><g transform="translate(2.32,1.92)" stroke="#9c9ea6" fill="#9c9ea6" opacity="0.102"><line x1="676.4" y1="53.5" x2="564.8" y2="78.1" stroke-width="2.5"/><polygon points="555.0,80.2 565.8,73.5 567.6,81.7"/></g><g transform="translate(1.74,1.44)" stroke="#9c9ea6" fill="#9c9ea6" opacity="0.117"><line x1="676.4" y1="53.5" x2="564.8" y2="78.1" stroke-width="2.5"/><polygon points="555.0,80.2 565.8,73.5 567.6,81.7"/></g><g transform="translate(1.16,0.96)" stroke="#9c9ea6" fill="#9c9ea6" opacity="0.132"><line x1="676.4" y1="53.5" x2="564.8" y2="78.1" stroke-width="2.5"/><polygon points="555.0,80.2 565.8,73.5 567.6,81.7"/></g><g transform="translate(0.58,0.48)" stroke="#9c9ea6" fill="#9c9ea6" opacity="0.147"><line x1="676.4" y1="53.5" x2="564.8" y2="78.1" stroke-width="2.5"/><polygon points="555.0,80.2 565.8,73.5 567.6,81.7"/></g><g stroke="#f73416" fill="#f73416"><line x1="676.4" y1="53.5" x2="564.8" y2="78.1" stroke-width="2.5"/><polygon stroke="none" points="555.0,80.2 565.8,73.5 567.6,81.7"/></g>
<g stroke="#53555d" stroke-width="1.15" fill="none"><path d="M1079.2 263.8 L1088.8 254.2 M1084.0 263.8 L1088.8 259.0"/></g>
</svg></section>
<section class="panel" style="left:5px;top:273px;width:1085px;height:372px"><svg width="1085" height="372" viewBox="5 273 1085 372" font-family='"Liberation Sans", Arial, sans-serif'>
<rect x="87" y="343" width="986" height="1" fill="#2a2c31"/>
<rect x="87" y="393" width="986" height="1" fill="#2a2c31"/>
<rect x="87" y="443" width="986" height="1" fill="#2a2c31"/>
<rect x="87" y="493" width="986" height="1" fill="#2a2c31"/>
<rect x="87" y="543" width="986" height="1" fill="#2a2c31"/>
<rect x="113" y="322" width="1" height="226" fill="#2a2c31"/>
<rect x="229" y="322" width="1" height="226" fill="#2a2c31"/>
<rect x="345" y="322" width="1" height="226" fill="#2a2c31"/>
<rect x="461" y="322" width="1" height="226" fill="#2a2c31"/>
<rect x="578" y="322" width="1" height="226" fill="#2a2c31"/>
<rect x="694" y="322" width="1" height="226" fill="#2a2c31"/>
<rect x="810" y="322" width="1" height="226" fill="#2a2c31"/>
<rect x="926" y="322" width="1" height="226" fill="#2a2c31"/>
<rect x="1043" y="322" width="1" height="226" fill="#2a2c31"/>
<polygon points="87.0,346.3 723.7,346.3 726.0,349.0 728.6,362.9 769.3,362.9 770.5,366.0 772.0,373.2 1060.0,373.2 1061.3,375.0 1063.0,380.0 1073.0,380.0 1073,544 87,544" fill="#8DC876" fill-opacity="0.195"/>
<polygon points="87.0,540.2 721.8,540.2 724.5,537.0 728.6,523.3 769.3,523.3 770.5,520.0 772.0,513.5 1060.0,513.5 1061.3,511.5 1063.0,506.2 1073.0,506.2 1073,544 87,544" fill="#D9D51C" fill-opacity="0.195"/>
<polyline points="87.0,346.3 723.7,346.3 726.0,349.0 728.6,362.9 769.3,362.9 770.5,366.0 772.0,373.2 1060.0,373.2 1061.3,375.0 1063.0,380.0 1073.0,380.0" fill="none" stroke="#84c46f" stroke-width="1.1" stroke-linejoin="round"/>
<polyline points="87.0,540.2 721.8,540.2 724.5,537.0 728.6,523.3 769.3,523.3 770.5,520.0 772.0,513.5 1060.0,513.5 1061.3,511.5 1063.0,506.2 1073.0,506.2" fill="none" stroke="#e0c934" stroke-width="1.1" stroke-linejoin="round"/>
<text x="81.7" y="346.9" font-size="12.4" text-anchor="end" fill="#ccccdc" font-weight="400" textLength="34.7" lengthAdjust="spacingAndGlyphs" stroke="#ccccdc" stroke-width="0.25">16 GiB</text>
<text x="81.7" y="396.9" font-size="12.4" text-anchor="end" fill="#ccccdc" font-weight="400" textLength="34.7" lengthAdjust="spacingAndGlyphs" stroke="#ccccdc" stroke-width="0.25">12 GiB</text>
<text x="81.7" y="446.9" font-size="12.4" text-anchor="end" fill="#ccccdc" font-weight="400" textLength="30.1" lengthAdjust="spacingAndGlyphs" stroke="#ccccdc" stroke-width="0.25">8 GiB</text>
<text x="81.7" y="496.9" font-size="12.4" text-anchor="end" fill="#ccccdc" font-weight="400" textLength="30.1" lengthAdjust="spacingAndGlyphs" stroke="#ccccdc" stroke-width="0.25">4 GiB</text>
<text x="81.7" y="546.8" font-size="12.4" text-anchor="end" fill="#ccccdc" font-weight="400" textLength="18.1" lengthAdjust="spacingAndGlyphs" stroke="#ccccdc" stroke-width="0.25">0 B</text>
<text x="113.5" y="562.4" font-size="12.4" text-anchor="middle" fill="#ccccdc" font-weight="400" textLength="28.3" lengthAdjust="spacingAndGlyphs" stroke="#ccccdc" stroke-width="0.25">01/12</text>
<text x="229.5" y="562.4" font-size="12.4" text-anchor="middle" fill="#ccccdc" font-weight="400" textLength="28.3" lengthAdjust="spacingAndGlyphs" stroke="#ccccdc" stroke-width="0.25">01/14</text>
<text x="345.5" y="562.4" font-size="12.4" text-anchor="middle" fill="#ccccdc" font-weight="400" textLength="28.8" lengthAdjust="spacingAndGlyphs" stroke="#ccccdc" stroke-width="0.25">01/16</text>
<text x="461.5" y="562.4" font-size="12.4" text-anchor="middle" fill="#ccccdc" font-weight="400" textLength="28.8" lengthAdjust="spacingAndGlyphs" stroke="#ccccdc" stroke-width="0.25">01/18</text>
<text x="578.5" y="562.4" font-size="12.4" text-anchor="middle" fill="#ccccdc" font-weight="400" textLength="31.0" lengthAdjust="spacingAndGlyphs" stroke="#ccccdc" stroke-width="0.25">01/20</text>
<text x="694.5" y="562.4" font-size="12.4" text-anchor="middle" fill="#ccccdc" font-weight="400" textLength="30.0" lengthAdjust="spacingAndGlyphs" stroke="#ccccdc" stroke-width="0.25">01/22</text>
<text x="810.5" y="562.4" font-size="12.4" text-anchor="middle" fill="#ccccdc" font-weight="400" textLength="30.0" lengthAdjust="spacingAndGlyphs" stroke="#ccccdc" stroke-width="0.25">01/24</text>
<text x="926.5" y="562.4" font-size="12.4" text-anchor="middle" fill="#ccccdc" font-weight="400" textLength="31.0" lengthAdjust="spacingAndGlyphs" stroke="#ccccdc" stroke-width="0.25">01/26</text>
<text x="1043.5" y="562.4" font-size="12.4" text-anchor="middle" fill="#ccccdc" font-weight="400" textLength="30.5" lengthAdjust="spacingAndGlyphs" stroke="#ccccdc" stroke-width="0.25">01/28</text>
<g transform="translate(24.3,433.2) rotate(-90)"><text x="0.0" y="0.0" font-size="12.4" text-anchor="middle" fill="#ccccdc" font-weight="400" textLength="30.8" lengthAdjust="spacingAndGlyphs" stroke="#ccccdc" stroke-width="0.25">bytes</text></g>
<text x="14.5" y="296.0" font-size="14.4" text-anchor="start" fill="#ccccdc" font-weight="400" textLength="130.3" lengthAdjust="spacingAndGlyphs" stroke="#ccccdc" stroke-width="0.35">Memory DirectMap</text>
<text x="44.0" y="580.0" font-size="12.4" text-anchor="start" fill="#6e9fff" font-weight="400" textLength="33.7" lengthAdjust="spacingAndGlyphs" stroke="#6e9fff" stroke-width="0.3">Name</text>
<text x="939.0" y="580.0" font-size="12.4" text-anchor="end" fill="#6e9fff" font-weight="400" textLength="31.8" lengthAdjust="spacingAndGlyphs" stroke="#6e9fff" stroke-width="0.3">Mean</text>
<text x="1002.5" y="580.0" font-size="12.4" text-anchor="end" fill="#6e9fff" font-weight="400" textLength="24.3" lengthAdjust="spacingAndGlyphs" stroke="#6e9fff" stroke-width="0.3">Max</text>
<text x="1065.5" y="580.0" font-size="12.4" text-anchor="end" fill="#6e9fff" font-weight="400" textLength="20.8" lengthAdjust="spacingAndGlyphs" stroke="#6e9fff" stroke-width="0.3">Min</text>
<rect x="14" y="587" width="1067" height="1" fill="#26282d"/>
<rect x="14" y="611" width="1067" height="1" fill="#26282d"/>
<rect x="14" y="635" width="1067" height="1" fill="#26282d"/>
<rect x="22" y="598.0" width="14" height="4" rx="2" fill="#8ac672"/>
<text x="44.0" y="603.9" font-size="12.4" text-anchor="start" fill="#ccccdc" font-weight="400" textLength="77.8" lengthAdjust="spacingAndGlyphs">DirectMap2M</text><text x="127.9" y="603.9" font-size="12.4" text-anchor="start" fill="#ccccdc" font-weight="400" textLength="5.9" lengthAdjust="spacingAndGlyphs">-</text><text x="137.9" y="603.9" font-size="12.4" text-anchor="start" fill="#ccccdc" font-weight="400" textLength="216.1" lengthAdjust="spacingAndGlyphs">Amount of pages mapped as this size</text>
<text x="939.5" y="603.9" font-size="12.4" text-anchor="end" fill="#ccccdc" font-weight="400" textLength="49.7" lengthAdjust="spacingAndGlyphs">15.0 GiB</text>
<text x="1006.0" y="603.9" font-size="12.4" text-anchor="end" fill="#ccccdc" font-weight="400" textLength="49.1" lengthAdjust="spacingAndGlyphs">15.8 GiB</text>
<text x="1072.8" y="603.9" font-size="12.4" text-anchor="end" fill="#ccccdc" font-weight="400" textLength="49.4" lengthAdjust="spacingAndGlyphs">13.0 GiB</text>
<rect x="22" y="622.0" width="14" height="4" rx="2" fill="#edd03a"/>
<text x="44.0" y="627.9" font-size="12.4" text-anchor="start" fill="#ccccdc" font-weight="400" textLength="75.8" lengthAdjust="spacingAndGlyphs">DirectMap4K</text><text x="124.9" y="627.9" font-size="12.4" text-anchor="start" fill="#ccccdc" font-weight="400" textLength="5.8" lengthAdjust="spacingAndGlyphs">-</text><text x="134.9" y="627.9" font-size="12.4" text-anchor="start" fill="#ccccdc" font-weight="400" textLength="216.1" lengthAdjust="spacingAndGlyphs">Amount of pages mapped as this size</text>
<text x="939.5" y="627.9" font-size="12.4" text-anchor="end" fill="#ccccdc" font-weight="400" textLength="48.3" lengthAdjust="spacingAndGlyphs">993 MiB</text>
<text x="1006.0" y="627.9" font-size="12.4" text-anchor="end" fill="#ccccdc" font-weight="400" textLength="49.1" lengthAdjust="spacingAndGlyphs">2.96 GiB</text>
<text x="1072.8" y="627.9" font-size="12.4" text-anchor="end" fill="#ccccdc" font-weight="400" textLength="48.3" lengthAdjust="spacingAndGlyphs">239 MiB</text>
<rect x="733" y="428" width="186" height="22" fill="none" stroke="#f73416" stroke-width="2" shape-rendering="crispEdges"/><text x="783.2" y="443.9" font-size="13.6" text-anchor="start" fill="#e3301b" font-weight="400" textLength="85.7" lengthAdjust="spacingAndGlyphs">fragmentation?</text>
<g stroke="#53555d" stroke-width="1.15" fill="none"><path d="M1079.2 643.8 L1088.8 634.2 M1084.0 643.8 L1088.8 639.0"/></g>
</svg></section>
<section class="panel" style="left:5px;top:653px;width:1085px;height:372px"><svg width="1085" height="372" viewBox="5 653 1085 372" font-family='"Liberation Sans", Arial, sans-serif'><defs><clipPath id="lg3"><rect x="6" y="926" width="1083" height="90"/></clipPath></defs>
<rect x="91.5" y="727" width="981.5" height="1" fill="#2a2c31"/>
<rect x="91.5" y="758" width="981.5" height="1" fill="#2a2c31"/>
<rect x="91.5" y="789" width="981.5" height="1" fill="#2a2c31"/>
<rect x="91.5" y="820" width="981.5" height="1" fill="#2a2c31"/>
<rect x="91.5" y="851" width="981.5" height="1" fill="#2a2c31"/>
<rect x="91.5" y="882" width="981.5" height="1" fill="#2a2c31"/>
<rect x="117" y="702" width="1" height="185" fill="#2a2c31"/>
<rect x="232" y="702" width="1" height="185" fill="#2a2c31"/>
<rect x="348" y="702" width="1" height="185" fill="#2a2c31"/>
<rect x="464" y="702" width="1" height="185" fill="#2a2c31"/>
<rect x="580" y="702" width="1" height="185" fill="#2a2c31"/>
<rect x="696" y="702" width="1" height="185" fill="#2a2c31"/>
<rect x="811" y="702" width="1" height="185" fill="#2a2c31"/>
<rect x="927" y="702" width="1" height="185" fill="#2a2c31"/>
<rect x="1043" y="702" width="1" height="185" fill="#2a2c31"/>
<polygon points="91.4,852.2 93.7,882.6 100.0,882.6 102.3,855.2 105.5,882.6 109.2,882.6 112.4,849.5 115.3,882.6 121.0,882.6 124.4,827.2 126.7,882.6 129.0,882.6 131.5,856.4 134.2,882.6 136.3,856.4 138.6,882.6 141.5,801.0 143.8,882.6 146.3,797.6 148.4,823.8 150.4,815.1 153.4,849.5 155.2,845.4 158.6,882.6 160.4,846.1 162.5,882.6 170.0,882.6 172.3,851.1 175.3,882.6 177.5,837.4 179.8,882.6 182.6,850.4 184.4,850.4 187.6,882.6 191.2,882.6 194.0,859.0 196.2,788.4 199.2,798.7 201.5,768.4 203.5,793.0 206.5,791.2 208.3,797.6 213.3,787.3 218.3,797.6 220.4,822.6 223.6,791.2 225.4,795.3 228.4,787.3 230.4,797.6 232.7,797.1 235.7,791.2 237.7,798.7 240.7,782.1 244.5,793.0 249.1,794.6 252.5,776.1 254.6,793.7 259.6,791.9 261.6,745.1 264.1,786.2 266.4,823.8 269.6,786.2 271.7,780.5 273.7,787.3 276.4,812.8 278.7,785.0 281.5,788.4 283.5,796.0 286.2,795.3 288.1,796.4 290.8,792.5 293.1,792.5 295.4,788.4 298.3,793.4 300.4,789.6 302.7,791.2 305.6,784.6 307.4,801.0 310.6,781.1 312.5,800.5 314.7,793.4 317.5,796.4 319.7,756.5 322.3,745.1 324.6,796.4 329.6,790.7 331.9,781.6 334.6,822.6 336.9,789.6 339.6,783.4 341.6,796.4 346.7,796.4 348.5,786.2 351.4,788.9 353.5,784.6 355.6,824.4 358.7,800.3 361.0,799.4 363.3,801.0 365.4,796.4 367.4,803.2 370.4,791.9 372.4,797.6 377.0,796.4 380.4,820.3 382.9,795.3 384.9,791.4 387.5,791.4 389.5,800.3 392.2,794.1 394.3,727.4 396.6,727.4 399.3,815.3 401.4,798.7 403.9,797.1 406.6,792.5 409.3,794.1 411.8,799.4 413.9,795.3 416.6,802.1 418.7,793.4 421.4,796.0 423.7,794.4 426.0,800.3 428.5,800.3 430.8,827.2 433.5,795.3 435.3,801.0 437.8,794.8 440.3,792.5 442.6,802.6 445.3,804.8 447.6,793.4 450.1,798.7 452.6,801.7 454.5,724.2 457.2,800.3 459.5,781.1 462.7,812.4 465.2,797.6 467.2,793.7 469.7,798.2 472.7,795.3 476.1,796.0 478.6,777.5 481.6,798.7 484.1,795.3 487.0,798.7 489.1,797.6 491.8,790.7 493.9,800.3 495.9,796.6 498.4,798.2 500.9,792.5 505.3,797.6 507.6,784.6 510.3,787.3 515.5,722.3 517.8,788.9 519.6,794.4 522.8,791.4 524.6,792.5 526.9,791.4 529.7,798.7 532.4,793.4 534.4,817.6 536.5,786.6 539.2,786.6 541.5,783.4 544.5,783.4 546.8,786.2 548.6,792.5 551.3,789.6 553.6,816.5 556.6,789.6 558.6,786.6 560.7,798.7 562.7,795.3 565.7,794.4 568.2,790.7 570.0,794.4 573.2,720.1 577.8,795.3 580.5,800.3 582.8,800.3 585.5,804.4 589.2,791.9 591.9,801.7 594.2,797.6 597.6,804.4 600.1,796.6 603.3,795.3 606.3,796.6 609.7,790.7 611.5,823.8 614.2,787.3 616.3,780.5 618.8,788.0 621.5,786.6 623.8,793.4 628.4,787.3 633.4,803.2 636.1,803.2 638.6,797.6 640.9,805.5 645.5,731.0 647.5,806.7 652.3,797.6 655.0,796.6 657.5,807.8 659.6,803.2 662.1,803.2 664.4,799.4 667.6,810.5 669.6,772.5 671.7,803.2 674.2,793.4 676.7,805.5 679.4,790.7 681.7,790.7 683.5,803.2 686.5,801.7 688.5,803.2 691.5,784.3 693.3,793.4 696.5,723.0 698.6,795.3 700.6,795.3 703.6,786.6 705.4,785.0 707.7,788.9 709.5,787.3 711.6,792.5 715.4,788.0 720.2,795.3 722.3,786.2 724.5,795.3 729.3,788.4 730.9,831.7 732.7,882.6 734.3,882.6 737.5,810.5 740.0,882.6 741.6,857.9 744.6,882.6 751.0,882.6 753.7,845.4 756.4,839.7 758.7,882.6 761.7,882.6 763.5,814.2 765.8,882.6 775.4,882.6 778.3,848.1 780.4,882.6 782.7,843.1 785.2,882.6 787.4,807.8 790.2,812.4 792.5,806.2 794.7,882.6 798.8,882.6 802.0,846.6 804.3,845.4 806.3,841.2 809.5,803.3 812.2,882.3 814.3,808.2 816.8,882.3 819.5,782.2 821.7,882.3 831.1,882.3 833.3,846.6 835.5,882.3 838.4,820.1 840.6,882.3 861.7,882.3 864.4,813.3 866.9,882.3 869.6,814.1 872.6,882.3 890.7,882.3 893.4,814.1 898.8,882.3 917.0,882.3 920.5,811.4 925.9,882.3 938.9,882.3 942.4,814.1 945.6,882.3 949.2,868.3 951.6,882.3 970.0,882.3 973.5,861.5 976.0,882.3 984.9,882.3 987.6,839.3 990.6,882.3 992.2,882.3 995.2,812.0 997.6,811.4 999.5,857.4 1003.0,882.3 1011.2,882.3 1014.4,802.5 1016.6,882.3 1018.7,882.3 1021.4,757.3 1024.1,789.7 1026.9,882.3 1040.4,882.3 1043.6,845.2 1045.8,882.3 1060.4,882.3 1065.3,843.9 1067.5,841.2 1069.4,882.3 1072.9,882.3 1073,882.6 91.5,882.6" fill="#6E96F0" fill-opacity="0.2"/>
<polyline points="91.4,852.2 93.7,882.6 100.0,882.6 102.3,855.2 105.5,882.6 109.2,882.6 112.4,849.5 115.3,882.6 121.0,882.6 124.4,827.2 126.7,882.6 129.0,882.6 131.5,856.4 134.2,882.6 136.3,856.4 138.6,882.6 141.5,801.0 143.8,882.6 146.3,797.6 148.4,823.8 150.4,815.1 153.4,849.5 155.2,845.4 158.6,882.6 160.4,846.1 162.5,882.6 170.0,882.6 172.3,851.1 175.3,882.6 177.5,837.4 179.8,882.6 182.6,850.4 184.4,850.4 187.6,882.6 191.2,882.6 194.0,859.0 196.2,788.4 199.2,798.7 201.5,768.4 203.5,793.0 206.5,791.2 208.3,797.6 213.3,787.3 218.3,797.6 220.4,822.6 223.6,791.2 225.4,795.3 228.4,787.3 230.4,797.6 232.7,797.1 235.7,791.2 237.7,798.7 240.7,782.1 244.5,793.0 249.1,794.6 252.5,776.1 254.6,793.7 259.6,791.9 261.6,745.1 264.1,786.2 266.4,823.8 269.6,786.2 271.7,780.5 273.7,787.3 276.4,812.8 278.7,785.0 281.5,788.4 283.5,796.0 286.2,795.3 288.1,796.4 290.8,792.5 293.1,792.5 295.4,788.4 298.3,793.4 300.4,789.6 302.7,791.2 305.6,784.6 307.4,801.0 310.6,781.1 312.5,800.5 314.7,793.4 317.5,796.4 319.7,756.5 322.3,745.1 324.6,796.4 329.6,790.7 331.9,781.6 334.6,822.6 336.9,789.6 339.6,783.4 341.6,796.4 346.7,796.4 348.5,786.2 351.4,788.9 353.5,784.6 355.6,824.4 358.7,800.3 361.0,799.4 363.3,801.0 365.4,796.4 367.4,803.2 370.4,791.9 372.4,797.6 377.0,796.4 380.4,820.3 382.9,795.3 384.9,791.4 387.5,791.4 389.5,800.3 392.2,794.1 394.3,727.4 396.6,727.4 399.3,815.3 401.4,798.7 403.9,797.1 406.6,792.5 409.3,794.1 411.8,799.4 413.9,795.3 416.6,802.1 418.7,793.4 421.4,796.0 423.7,794.4 426.0,800.3 428.5,800.3 430.8,827.2 433.5,795.3 435.3,801.0 437.8,794.8 440.3,792.5 442.6,802.6 445.3,804.8 447.6,793.4 450.1,798.7 452.6,801.7 454.5,724.2 457.2,800.3 459.5,781.1 462.7,812.4 465.2,797.6 467.2,793.7 469.7,798.2 472.7,795.3 476.1,796.0 478.6,777.5 481.6,798.7 484.1,795.3 487.0,798.7 489.1,797.6 491.8,790.7 493.9,800.3 495.9,796.6 498.4,798.2 500.9,792.5 505.3,797.6 507.6,784.6 510.3,787.3 515.5,722.3 517.8,788.9 519.6,794.4 522.8,791.4 524.6,792.5 526.9,791.4 529.7,798.7 532.4,793.4 534.4,817.6 536.5,786.6 539.2,786.6 541.5,783.4 544.5,783.4 546.8,786.2 548.6,792.5 551.3,789.6 553.6,816.5 556.6,789.6 558.6,786.6 560.7,798.7 562.7,795.3 565.7,794.4 568.2,790.7 570.0,794.4 573.2,720.1 577.8,795.3 580.5,800.3 582.8,800.3 585.5,804.4 589.2,791.9 591.9,801.7 594.2,797.6 597.6,804.4 600.1,796.6 603.3,795.3 606.3,796.6 609.7,790.7 611.5,823.8 614.2,787.3 616.3,780.5 618.8,788.0 621.5,786.6 623.8,793.4 628.4,787.3 633.4,803.2 636.1,803.2 638.6,797.6 640.9,805.5 645.5,731.0 647.5,806.7 652.3,797.6 655.0,796.6 657.5,807.8 659.6,803.2 662.1,803.2 664.4,799.4 667.6,810.5 669.6,772.5 671.7,803.2 674.2,793.4 676.7,805.5 679.4,790.7 681.7,790.7 683.5,803.2 686.5,801.7 688.5,803.2 691.5,784.3 693.3,793.4 696.5,723.0 698.6,795.3 700.6,795.3 703.6,786.6 705.4,785.0 707.7,788.9 709.5,787.3 711.6,792.5 715.4,788.0 720.2,795.3 722.3,786.2 724.5,795.3 729.3,788.4 730.9,831.7 732.7,882.6 734.3,882.6 737.5,810.5 740.0,882.6 741.6,857.9 744.6,882.6 751.0,882.6 753.7,845.4 756.4,839.7 758.7,882.6 761.7,882.6 763.5,814.2 765.8,882.6 775.4,882.6 778.3,848.1 780.4,882.6 782.7,843.1 785.2,882.6 787.4,807.8 790.2,812.4 792.5,806.2 794.7,882.6 798.8,882.6 802.0,846.6 804.3,845.4 806.3,841.2 809.5,803.3 812.2,882.3 814.3,808.2 816.8,882.3 819.5,782.2 821.7,882.3 831.1,882.3 833.3,846.6 835.5,882.3 838.4,820.1 840.6,882.3 861.7,882.3 864.4,813.3 866.9,882.3 869.6,814.1 872.6,882.3 890.7,882.3 893.4,814.1 898.8,882.3 917.0,882.3 920.5,811.4 925.9,882.3 938.9,882.3 942.4,814.1 945.6,882.3 949.2,868.3 951.6,882.3 970.0,882.3 973.5,861.5 976.0,882.3 984.9,882.3 987.6,839.3 990.6,882.3 992.2,882.3 995.2,812.0 997.6,811.4 999.5,857.4 1003.0,882.3 1011.2,882.3 1014.4,802.5 1016.6,882.3 1018.7,882.3 1021.4,757.3 1024.1,789.7 1026.9,882.3 1040.4,882.3 1043.6,845.2 1045.8,882.3 1060.4,882.3 1065.3,843.9 1067.5,841.2 1069.4,882.3 1072.9,882.3" fill="none" stroke="#6a94ee" stroke-width="1.1" stroke-linejoin="round"/>
<line x1="193" y1="702" x2="193" y2="883" stroke="#6ad6f5" stroke-width="2" stroke-dasharray="5 5"/>
<polygon points="188.4,887.5 197.6,887.5 193,882" fill="#5fcdf0"/>
<line x1="730" y1="702" x2="730" y2="883" stroke="#6ad6f5" stroke-width="2" stroke-dasharray="5 5"/>
<polygon points="725.4,887.5 734.6,887.5 730,882" fill="#5fcdf0"/>
<text x="85.9" y="730.9" font-size="12.4" text-anchor="end" fill="#ccccdc" font-weight="400" textLength="38.1" lengthAdjust="spacingAndGlyphs" stroke="#ccccdc" stroke-width="0.25">25 io/s</text>
<text x="85.9" y="762.1" font-size="12.4" text-anchor="end" fill="#ccccdc" font-weight="400" textLength="38.1" lengthAdjust="spacingAndGlyphs" stroke="#ccccdc" stroke-width="0.25">20 io/s</text>
<text x="85.9" y="793.1" font-size="12.4" text-anchor="end" fill="#ccccdc" font-weight="400" textLength="36.1" lengthAdjust="spacingAndGlyphs" stroke="#ccccdc" stroke-width="0.25">15 io/s</text>
<text x="85.9" y="824.1" font-size="12.4" text-anchor="end" fill="#ccccdc" font-weight="400" textLength="36.1" lengthAdjust="spacingAndGlyphs" stroke="#ccccdc" stroke-width="0.25">10 io/s</text>
<text x="85.9" y="855.1" font-size="12.4" text-anchor="end" fill="#ccccdc" font-weight="400" textLength="31.0" lengthAdjust="spacingAndGlyphs" stroke="#ccccdc" stroke-width="0.25">5 io/s</text>
<text x="85.9" y="885.9" font-size="12.4" text-anchor="end" fill="#ccccdc" font-weight="400" textLength="31.0" lengthAdjust="spacingAndGlyphs" stroke="#ccccdc" stroke-width="0.25">0 io/s</text>
<text x="116.8" y="900.8" font-size="12.4" text-anchor="middle" fill="#ccccdc" font-weight="400" textLength="28.3" lengthAdjust="spacingAndGlyphs" stroke="#ccccdc" stroke-width="0.25">01/12</text>
<text x="231.8" y="900.8" font-size="12.4" text-anchor="middle" fill="#ccccdc" font-weight="400" textLength="28.3" lengthAdjust="spacingAndGlyphs" stroke="#ccccdc" stroke-width="0.25">01/14</text>
<text x="347.8" y="900.8" font-size="12.4" text-anchor="middle" fill="#ccccdc" font-weight="400" textLength="28.8" lengthAdjust="spacingAndGlyphs" stroke="#ccccdc" stroke-width="0.25">01/16</text>
<text x="463.8" y="900.8" font-size="12.4" text-anchor="middle" fill="#ccccdc" font-weight="400" textLength="28.8" lengthAdjust="spacingAndGlyphs" stroke="#ccccdc" stroke-width="0.25">01/18</text>
<text x="579.8" y="900.8" font-size="12.4" text-anchor="middle" fill="#ccccdc" font-weight="400" textLength="31.0" lengthAdjust="spacingAndGlyphs" stroke="#ccccdc" stroke-width="0.25">01/20</text>
<text x="695.8" y="900.8" font-size="12.4" text-anchor="middle" fill="#ccccdc" font-weight="400" textLength="30.0" lengthAdjust="spacingAndGlyphs" stroke="#ccccdc" stroke-width="0.25">01/22</text>
<text x="810.8" y="900.8" font-size="12.4" text-anchor="middle" fill="#ccccdc" font-weight="400" textLength="30.0" lengthAdjust="spacingAndGlyphs" stroke="#ccccdc" stroke-width="0.25">01/24</text>
<text x="926.8" y="900.8" font-size="12.4" text-anchor="middle" fill="#ccccdc" font-weight="400" textLength="31.0" lengthAdjust="spacingAndGlyphs" stroke="#ccccdc" stroke-width="0.25">01/26</text>
<text x="1042.8" y="900.8" font-size="12.4" text-anchor="middle" fill="#ccccdc" font-weight="400" textLength="30.5" lengthAdjust="spacingAndGlyphs" stroke="#ccccdc" stroke-width="0.25">01/28</text>
<g transform="translate(23.4,792.7) rotate(-90)"><text x="0.0" y="0.0" font-size="12.4" text-anchor="middle" fill="#ccccdc" font-weight="400" textLength="117.0" lengthAdjust="spacingAndGlyphs" stroke="#ccccdc" stroke-width="0.25">IO read (-) / write (+)</text></g>
<text x="14.5" y="676.0" font-size="14.4" text-anchor="start" fill="#ccccdc" font-weight="400" textLength="142.2" lengthAdjust="spacingAndGlyphs" stroke="#ccccdc" stroke-width="0.35">Disk IOps Completed</text>
<circle cx="180.9" cy="670.0" r="6.1" stroke="#8e8f99" fill="none" stroke-width="1.6"/><rect x="179.8" y="666.95" width="2.2" height="1.7" rx="0.3" fill="#8e8f99"/><rect x="179.8" y="669.9" width="2.2" height="3.2" rx="0.3" fill="#8e8f99"/>
<text x="44.0" y="919.2" font-size="12.4" text-anchor="start" fill="#6e9fff" font-weight="400" textLength="33.7" lengthAdjust="spacingAndGlyphs" stroke="#6e9fff" stroke-width="0.3">Name</text>
<text x="842.0" y="919.2" font-size="12.4" text-anchor="end" fill="#6e9fff" font-weight="400" textLength="32.3" lengthAdjust="spacingAndGlyphs" stroke="#6e9fff" stroke-width="0.3">Mean</text>
<text x="928.0" y="919.2" font-size="12.4" text-anchor="end" fill="#6e9fff" font-weight="400" textLength="34.4" lengthAdjust="spacingAndGlyphs" stroke="#6e9fff" stroke-width="0.3">Last *</text>
<text x="992.0" y="919.2" font-size="12.4" text-anchor="end" fill="#6e9fff" font-weight="400" textLength="24.0" lengthAdjust="spacingAndGlyphs" stroke="#6e9fff" stroke-width="0.3">Max</text>
<text x="1056.5" y="919.2" font-size="12.4" text-anchor="end" fill="#6e9fff" font-weight="400" textLength="20.6" lengthAdjust="spacingAndGlyphs" stroke="#6e9fff" stroke-width="0.3">Min</text>
<rect x="14" y="926" width="1067" height="1" fill="#26282d"/>
<rect x="14" y="950" width="1067" height="1" fill="#26282d"/>
<rect x="14" y="974" width="1067" height="1" fill="#26282d"/>
<rect x="14" y="998" width="1067" height="1" fill="#26282d"/>
<g clip-path="url(#lg3)">
<rect x="22" y="937.1" width="14" height="4" rx="2" fill="#84c46f"/>
<text x="44.4" y="942.9" font-size="12.4" text-anchor="start" fill="#9192a0" font-weight="400" textLength="17.5" lengthAdjust="spacingAndGlyphs">dm</text><text x="63.6" y="942.9" font-size="12.4" text-anchor="start" fill="#9192a0" font-weight="400" textLength="5.4" lengthAdjust="spacingAndGlyphs">-</text><text x="70.6" y="942.9" font-size="12.4" text-anchor="start" fill="#9192a0" font-weight="400" textLength="6.6" lengthAdjust="spacingAndGlyphs">0</text><text x="83.2" y="942.9" font-size="12.4" text-anchor="start" fill="#9192a0" font-weight="400" textLength="5.5" lengthAdjust="spacingAndGlyphs">-</text><text x="92.5" y="942.9" font-size="12.4" text-anchor="start" fill="#9192a0" font-weight="400" textLength="99.9" lengthAdjust="spacingAndGlyphs">Reads completed</text>
<text x="855.2" y="942.9" font-size="12.4" text-anchor="end" fill="#c4c5d4" font-weight="400" textLength="59.3" lengthAdjust="spacingAndGlyphs">0.131 io/s</text>
<text x="929.0" y="942.9" font-size="12.4" text-anchor="end" fill="#c4c5d4" font-weight="400" textLength="32.3" lengthAdjust="spacingAndGlyphs">0 io/s</text>
<text x="997.2" y="942.9" font-size="12.4" text-anchor="end" fill="#c4c5d4" font-weight="400" textLength="51.6" lengthAdjust="spacingAndGlyphs">4.60 io/s</text>
<text x="1072.7" y="942.9" font-size="12.4" text-anchor="end" fill="#c4c5d4" font-weight="400" textLength="32.3" lengthAdjust="spacingAndGlyphs">0 io/s</text>
<rect x="22" y="961.1" width="14" height="4" rx="2" fill="#eed03c"/>
<text x="44.4" y="966.9" font-size="12.4" text-anchor="start" fill="#9192a0" font-weight="400" textLength="19.7" lengthAdjust="spacingAndGlyphs">sda</text><text x="70.9" y="966.9" font-size="12.4" text-anchor="start" fill="#9192a0" font-weight="400" textLength="5.4" lengthAdjust="spacingAndGlyphs">-</text><text x="80.1" y="966.9" font-size="12.4" text-anchor="start" fill="#9192a0" font-weight="400" textLength="99.2" lengthAdjust="spacingAndGlyphs">Reads completed</text>
<text x="855.2" y="966.9" font-size="12.4" text-anchor="end" fill="#c4c5d4" font-weight="400" textLength="67.6" lengthAdjust="spacingAndGlyphs">0.0928 io/s</text>
<text x="929.0" y="966.9" font-size="12.4" text-anchor="end" fill="#c4c5d4" font-weight="400" textLength="32.3" lengthAdjust="spacingAndGlyphs">0 io/s</text>
<text x="997.2" y="966.9" font-size="12.4" text-anchor="end" fill="#c4c5d4" font-weight="400" textLength="51.6" lengthAdjust="spacingAndGlyphs">4.47 io/s</text>
<text x="1072.7" y="966.9" font-size="12.4" text-anchor="end" fill="#c4c5d4" font-weight="400" textLength="32.3" lengthAdjust="spacingAndGlyphs">0 io/s</text>
<rect x="22" y="985.1" width="14" height="4" rx="2" fill="#a3bfff"/>
<text x="44.4" y="990.9" font-size="12.4" text-anchor="start" fill="#9192a0" font-weight="400" textLength="20.4" lengthAdjust="spacingAndGlyphs">sdb</text><text x="71.6" y="990.9" font-size="12.4" text-anchor="start" fill="#9192a0" font-weight="400" textLength="5.4" lengthAdjust="spacingAndGlyphs">-</text><text x="80.8" y="990.9" font-size="12.4" text-anchor="start" fill="#9192a0" font-weight="400" textLength="99.3" lengthAdjust="spacingAndGlyphs">Reads completed</text>
<text x="855.2" y="990.9" font-size="12.4" text-anchor="end" fill="#c4c5d4" font-weight="400" textLength="32.6" lengthAdjust="spacingAndGlyphs">0 io/s</text>
<text x="929.0" y="990.9" font-size="12.4" text-anchor="end" fill="#c4c5d4" font-weight="400" textLength="32.3" lengthAdjust="spacingAndGlyphs">0 io/s</text>
<text x="997.2" y="990.9" font-size="12.4" text-anchor="end" fill="#c4c5d4" font-weight="400" textLength="32.5" lengthAdjust="spacingAndGlyphs">0 io/s</text>
<text x="1072.7" y="990.9" font-size="12.4" text-anchor="end" fill="#c4c5d4" font-weight="400" textLength="32.3" lengthAdjust="spacingAndGlyphs">0 io/s</text>
<rect x="22" y="1009.1" width="14" height="4" rx="2" fill="#ef8429"/>
<text x="44.4" y="1014.9" font-size="12.4" text-anchor="start" fill="#9192a0" font-weight="400" textLength="17.5" lengthAdjust="spacingAndGlyphs">dm</text><text x="63.6" y="1014.9" font-size="12.4" text-anchor="start" fill="#9192a0" font-weight="400" textLength="5.4" lengthAdjust="spacingAndGlyphs">-</text><text x="70.6" y="1014.9" font-size="12.4" text-anchor="start" fill="#9192a0" font-weight="400" textLength="6.6" lengthAdjust="spacingAndGlyphs">0</text><text x="83.2" y="1014.9" font-size="12.4" text-anchor="start" fill="#9192a0" font-weight="400" textLength="5.5" lengthAdjust="spacingAndGlyphs">-</text><text x="92.5" y="1014.9" font-size="12.4" text-anchor="start" fill="#9192a0" font-weight="400" textLength="101.1" lengthAdjust="spacingAndGlyphs">Writes completed</text>
<text x="855.2" y="1014.9" font-size="12.4" text-anchor="end" fill="#c4c5d4" font-weight="400" textLength="51.3" lengthAdjust="spacingAndGlyphs">2.18 io/s</text>
<text x="929.0" y="1014.9" font-size="12.4" text-anchor="end" fill="#c4c5d4" font-weight="400" textLength="31.6" lengthAdjust="spacingAndGlyphs">2 io/s</text>
<text x="997.2" y="1014.9" font-size="12.4" text-anchor="end" fill="#c4c5d4" font-weight="400" textLength="51.6" lengthAdjust="spacingAndGlyphs">12.3 io/s</text>
<text x="1072.7" y="1014.9" font-size="12.4" text-anchor="end" fill="#c4c5d4" font-weight="400" textLength="59.3" lengthAdjust="spacingAndGlyphs">0.533 io/s</text>
</g>
<rect x="748" y="683" width="202" height="21" fill="none" stroke="#f73416" stroke-width="2" shape-rendering="crispEdges"/><text x="765.2" y="698.0" font-size="13.6" text-anchor="start" fill="#e3301b" font-weight="400" textLength="167.1" lengthAdjust="spacingAndGlyphs">txg_timeout=120 intervention</text>
<g transform="translate(5.22,4.32)" stroke="#9c9ea6" fill="#9c9ea6" opacity="0.027"><line x1="748.6" y1="702.6" x2="735.2" y2="721.3" stroke-width="2.5"/><polygon points="729.4,729.4 733.0,717.2 739.8,722.1"/></g><g transform="translate(4.64,3.84)" stroke="#9c9ea6" fill="#9c9ea6" opacity="0.042"><line x1="748.6" y1="702.6" x2="735.2" y2="721.3" stroke-width="2.5"/><polygon points="729.4,729.4 733.0,717.2 739.8,722.1"/></g><g transform="translate(4.06,3.36)" stroke="#9c9ea6" fill="#9c9ea6" opacity="0.057"><line x1="748.6" y1="702.6" x2="735.2" y2="721.3" stroke-width="2.5"/><polygon points="729.4,729.4 733.0,717.2 739.8,722.1"/></g><g transform="translate(3.48,2.88)" stroke="#9c9ea6" fill="#9c9ea6" opacity="0.072"><line x1="748.6" y1="702.6" x2="735.2" y2="721.3" stroke-width="2.5"/><polygon points="729.4,729.4 733.0,717.2 739.8,722.1"/></g><g transform="translate(2.90,2.40)" stroke="#9c9ea6" fill="#9c9ea6" opacity="0.087"><line x1="748.6" y1="702.6" x2="735.2" y2="721.3" stroke-width="2.5"/><polygon points="729.4,729.4 733.0,717.2 739.8,722.1"/></g><g transform="translate(2.32,1.92)" stroke="#9c9ea6" fill="#9c9ea6" opacity="0.102"><line x1="748.6" y1="702.6" x2="735.2" y2="721.3" stroke-width="2.5"/><polygon points="729.4,729.4 733.0,717.2 739.8,722.1"/></g><g transform="translate(1.74,1.44)" stroke="#9c9ea6" fill="#9c9ea6" opacity="0.117"><line x1="748.6" y1="702.6" x2="735.2" y2="721.3" stroke-width="2.5"/><polygon points="729.4,729.4 733.0,717.2 739.8,722.1"/></g><g transform="translate(1.16,0.96)" stroke="#9c9ea6" fill="#9c9ea6" opacity="0.132"><line x1="748.6" y1="702.6" x2="735.2" y2="721.3" stroke-width="2.5"/><polygon points="729.4,729.4 733.0,717.2 739.8,722.1"/></g><g transform="translate(0.58,0.48)" stroke="#9c9ea6" fill="#9c9ea6" opacity="0.147"><line x1="748.6" y1="702.6" x2="735.2" y2="721.3" stroke-width="2.5"/><polygon points="729.4,729.4 733.0,717.2 739.8,722.1"/></g><g stroke="#f73416" fill="#f73416"><line x1="748.6" y1="702.6" x2="735.2" y2="721.3" stroke-width="2.5"/><polygon stroke="none" points="729.4,729.4 733.0,717.2 739.8,722.1"/></g>
<g stroke="#53555d" stroke-width="1.15" fill="none"><path d="M1079.2 1023.8 L1088.8 1014.2 M1084.0 1023.8 L1088.8 1019.0"/></g>
</svg></section>
</body></html>
